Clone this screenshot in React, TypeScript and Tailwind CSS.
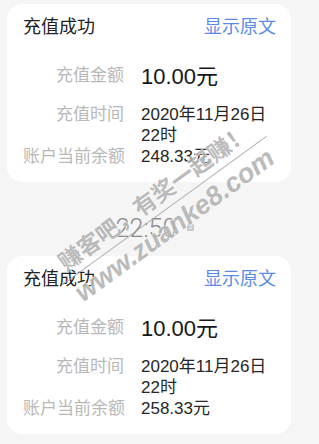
import React from "react";

const FONT = "font-['Liberation_Sans','Noto_Sans_CJK_SC',sans-serif]";

// one "充值成功" notification card
function RechargeCard({ balance }: { balance: string }) {
  return (
    <div className="w-[284px] rounded-[15px] bg-white pl-4 pr-[15px] pt-[11px] pb-[15px]">
      <div className="flex h-6 items-center justify-between leading-6">
        <span className="text-[18px] text-[#222222]">充值成功</span>
        <span className="text-[18px] text-[#5b8ae6]">显示原文</span>
      </div>

      <div className="mt-[22px] flex h-[30px] items-center">
        <span className="w-[101px] text-right text-[17px] text-[#b8b8b8]">充值金额</span>
        <span className="ml-[17px] text-[22px] text-[#161616]">10.00元</span>
      </div>

      <div className="mt-[13px] flex items-start leading-[21px]">
        <span className="w-[101px] text-right text-[17px] text-[#b8b8b8]">充值时间</span>
        <div className="ml-[17px] flex flex-col text-[17px] text-[#262626]">
          <span>2020年11月26日</span>
          <span>22时</span>
        </div>
      </div>

      <div className="flex items-start leading-[21px]">
        <span className="w-[101px] whitespace-nowrap text-right text-[17px] text-[#b8b8b8]">账户当前余额</span>
        <span className="ml-[17px] text-[17px] text-[#262626]">{balance}</span>
      </div>
    </div>
  );
}

export default function App() {
  return (
    <div className={`relative h-[444px] w-[319px] overflow-hidden bg-[#f5f5f5] pt-[4px] pl-[7px] ${FONT}`}>
      <RechargeCard balance="248.33元" />

      {/* time divider between messages */}
      <div className="mt-[32px] mb-[12px] flex h-[30px] w-[284px] items-center justify-center pl-[12px]">
        <span className="font-['Roboto',sans-serif] text-[25px] font-light leading-[30px] text-[#8c8c8c]">22:50</span>
        <span className="ml-[11px] -mt-[3px] flex h-[7px] w-[7px] items-center justify-center rounded-[1.5px] bg-[#c9c9c9] text-[5px] leading-none text-white">
          2
        </span>
      </div>

      <RechargeCard balance="258.33元" />

      {/* site watermark */}
      <div className="pointer-events-none absolute left-[165px] top-[212px] z-10 flex -translate-x-1/2 -translate-y-1/2 rotate-[-36deg] flex-col items-center opacity-90">
        <span className="whitespace-nowrap text-[23px] font-bold leading-[26px] text-[#b4b4b4] [-webkit-text-stroke:1px_#ffffff] [paint-order:stroke_fill]">
          赚客吧，有奖一起赚！
        </span>
        <div className="mt-[3px] h-px w-[253px] bg-[#a8a8a8]" />
        <span className="mt-[2px] whitespace-nowrap text-[27px] font-bold italic leading-[30px] text-[#b4b4b4] [-webkit-text-stroke:1px_#ffffff] [paint-order:stroke_fill]">
          www.zuanke8.com
        </span>
      </div>
    </div>
  );
}
